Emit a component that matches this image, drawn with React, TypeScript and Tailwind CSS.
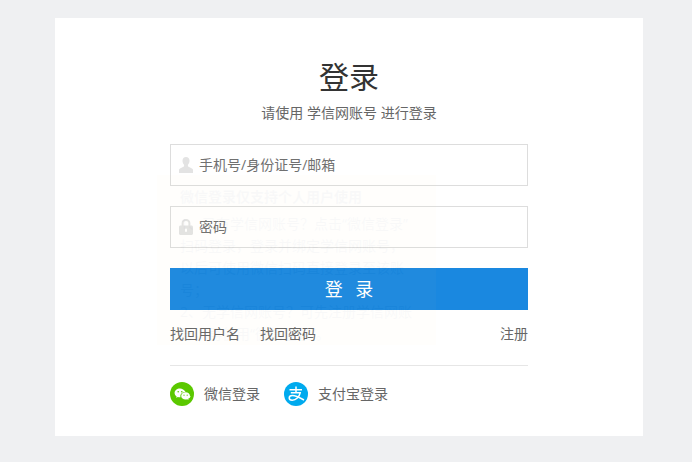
import { useState } from 'react';

const CJK = "font-['Open_Sans','Noto_Sans_CJK_SC',sans-serif]";

function UserIcon() {
  return (
    <svg width="14" height="16" viewBox="0 0 14 16" className="fill-[#e3e3e3]">
      <path d="M7 0c2.200 0 3.500 1.600 3.500 3.800 0 1.600-.7 3-1.600 4v1.300c0 .6 1.200 1 2.600 1.600 1.400.6 2.500 1.200 2.500 2.300V16H0v-3c0-1.100 1.100-1.700 2.500-2.300 1.400-.6 2.600-1 2.600-1.600V7.800c-.9-1-1.600-2.400-1.600-4C3.500 1.600 4.800 0 7 0z" />
    </svg>
  );
}

function LockIcon() {
  return (
    <svg width="14" height="16" viewBox="0 0 14 16" className="fill-[#e3e3e3]">
      <path d="M7 0C4.400 0 2.600 1.700 2.600 4v2.500H1.500C.7 6.500 0 7.200 0 8v6.500C0 15.300.7 16 1.500 16h11c.8 0 1.500-.7 1.500-1.500V8c0-.8-.7-1.500-1.500-1.500h-1.100V4C11.400 1.700 9.600 0 7 0zm0 2c1.500 0 2.400.9 2.400 2.200v2.300H4.600V4.200C4.600 2.900 5.500 2 7 2z" />
      <rect x="6" y="9.500" width="2" height="3.500" rx="1" fill="#fff" />
    </svg>
  );
}

function WechatIcon() {
  return (
    <svg width="24" height="24" viewBox="0 0 24 24">
      <circle cx="12" cy="12" r="12" fill="#5bc800" />
      <path d="M10 6.500c-3 0-5.400 2-5.400 4.400 0 1.400.8 2.600 2 3.400l-.5 1.500 1.800-.9c.6.200 1.300.3 2.100.3h.5c-.1-.4-.2-.8-.2-1.200 0-2.300 2.100-4.100 4.900-4.100h.4C14.100 8 12.300 6.500 10 6.500z" fill="#fff" />
      <path d="M20 13.900c0-2-2-3.600-4.400-3.600s-4.400 1.600-4.400 3.600 2 3.600 4.400 3.600c.5 0 1-.1 1.500-.2l1.500.8-.4-1.300c1.400-.7 2.300-1.700 2.300-2.900z" fill="#fff" />
      <circle cx="8.200" cy="9.800" r=".8" fill="#5bc800" />
      <circle cx="11.800" cy="9.800" r=".8" fill="#5bc800" />
      <circle cx="14" cy="13.200" r=".6" fill="#5bc800" />
      <circle cx="17.200" cy="13.200" r=".6" fill="#5bc800" />
    </svg>
  );
}

function AlipayIcon() {
  return (
    <svg width="24" height="24" viewBox="0 0 24 24">
      <circle cx="12" cy="12" r="12" fill="#00aaee" />
      <path d="M5.500 7.800h12.500M12 4.500v6.200M6.800 10.800h9.400c-.9 4-4.100 7.400-8 7.400-1.800 0-3-.8-3-2.200 0-1.500 1.300-2.400 3.200-2.400 2.600 0 6.200 1.500 11.600 4.400" fill="none" stroke="#fff" strokeWidth="1.500" />
    </svg>
  );
}

function Field({ icon, placeholder, type }: { icon: React.ReactNode; placeholder: string; type: string }) {
  const [value, setValue] = useState('');
  return (
    <label className="flex h-[42px] items-center border border-[#dddddd] bg-white pl-2 pr-2">
      <span className="flex w-[15px] shrink-0">{icon}</span>
      <input
        type={type}
        value={value}
        onChange={(e) => setValue(e.target.value)}
        placeholder={placeholder}
        className="ml-[5px] min-w-0 flex-1 bg-transparent text-sm text-[#555555] outline-none placeholder:text-[#707070]"
      />
    </label>
  );
}

export default function App() {
  return (
    <div className={`h-[462px] w-[692px] overflow-hidden bg-[#eff0f2] pt-[18px] ${CJK}`}>
      <main className="relative ml-[55px] h-[418px] w-[588px] bg-white px-[115px] pt-[38px]">
        <h1 className="text-center text-[30px] leading-[42px] text-[#333333]">登录</h1>
        <p className="mt-[5px] text-center text-sm leading-5 text-[#666666]">请使用 学信网账号 进行登录</p>

        <form className="mt-[21px] flex flex-col" onSubmit={(e) => e.preventDefault()}>
          <Field icon={<UserIcon />} placeholder="手机号/身份证号/邮箱" type="text" />
          <div className="mt-5">
            <Field icon={<LockIcon />} placeholder="密码" type="password" />
          </div>
          <button className="mt-5 h-[42px] bg-[#1a88e0] pl-1 text-lg tracking-[4px] text-white">登 录</button>
        </form>

        <div className="mt-[14px] flex justify-between text-sm leading-5 text-[#666666]">
          <div className="flex gap-5">
            <a>找回用户名</a>
            <a>找回密码</a>
          </div>
          <a>注册</a>
        </div>

        <div className="mt-[21px] flex gap-6 border-t border-[#e6e6e6] pt-4 text-sm text-[#666666]">
          <a className="flex items-center gap-[10px]"><WechatIcon />微信登录</a>
          <a className="flex items-center gap-[10px]"><AlipayIcon />支付宝登录</a>
        </div>

        {/* faint tooltip fading out over the form */}
        <div className="absolute left-[102px] top-[157px] h-[170px] w-[279px] bg-[#ffeeb0] px-[23px] pt-[11px] text-sm leading-[22px] text-[#222222] opacity-[0.025]">
          <p className="mb-[5px] font-bold">微信登录仅支持个人用户使用</p>
          <p>1、已有学信网账号？点击“微信登录”</p>
          <p>扫码登录，登录并绑定学信网账号，</p>
          <p>以后可使用微信扫码直接登录至该账</p>
          <p>号；</p>
          <p>2、无学信网账号？可先注册学信网账</p>
          <p>号，再使用“微信登录”。</p>
        </div>
      </main>
    </div>
  );
}
